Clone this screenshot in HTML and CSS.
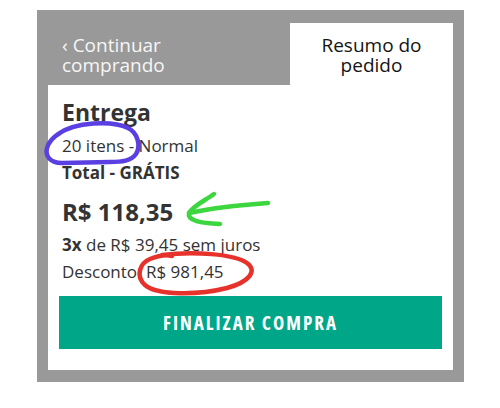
FILE: index.html
```html
<!DOCTYPE html>
<html lang="pt-BR">
<head>
<meta charset="utf-8">
<title>Resumo do pedido</title>
<link rel="stylesheet" href="styles.css">
</head>
<body>
<div class="frame">
  <div class="tabs">
    <div class="tab tab-back">&lsaquo; Continuar<br>comprando</div>
    <div class="tab tab-active">Resumo do<br>pedido</div>
  </div>
  <div class="panel">
    <div class="title">Entrega</div>
    <div class="items">20 itens - Normal</div>
    <div class="total">Total - GRÁTIS</div>
    <div class="price">R$ 118,35</div>
    <div class="install"><b>3x</b> de R$ 39,45 sem juros</div>
    <div class="discount">Desconto: R$ 981,45</div>
    <button class="checkout">FINALIZAR COMPRA</button>
  </div>
</div>
<svg class="marks" width="500" height="408" viewBox="0 0 500 408">
  <path class="mark-purple" d="M58 134 C75 122 112 120 128 128 C138 133 141 146 136 154 C131 161 122 162 110 162 L62 163 C50 163 45 156 47 148 C49 141 53 137 60 133"/>
  <path class="mark-green" d="M268 203 C240 205 212 208 189 213"/>
  <path class="mark-green" d="M214 194 C204 201 193 206 189 213 C187 221 201 223 220 224"/>
  <path class="mark-red" d="M162 255 C194 251 234 254 247 263 C258 271 249 282 227 288 C199 295 158 296 145 285 C135 276 140 263 150 259 C160 255 168 255 172 256"/>
</svg>
</body>
</html>
```
FILE: styles.css
```css
html, body {
  margin: 0;
  padding: 0;
  background: #ffffff;
}
body {
  font-family: "Open Sans", "Liberation Sans", sans-serif;
  color: #333333;
  width: 500px;
  height: 408px;
  position: relative;
  overflow: hidden;
}
.frame {
  margin: 10px 0 0 37px;
  width: 427px;
  box-sizing: border-box;
  background: #999999;
  padding: 13px 11px 12px;
}
.tabs {
  display: flex;
  height: 62px;
}
.tab {
  font-size: 19px;
  line-height: 20px;
  padding-top: 12px;
  box-sizing: border-box;
  white-space: nowrap;
}
.tab-back {
  flex: 1;
  color: #f6f6f6;
  padding-left: 14px;
}
.tab-active {
  width: 163px;
  background: #ffffff;
  color: #141414;
  text-align: center;
}
.panel {
  background: #ffffff;
  height: 285px;
  box-sizing: border-box;
  padding: 12px 11px 0;
}
.title, .items, .total, .price, .install, .discount {
  padding-left: 3px;
  white-space: nowrap;
}
.title {
  font-size: 23px;
  font-weight: 700;
  line-height: 30px;
}
.items {
  font-size: 17px;
  line-height: 24px;
  margin-top: 7px;
}
.total {
  font-size: 17px;
  font-weight: 700;
  line-height: 24px;
  margin-top: 3px;
}
.price {
  font-size: 24px;
  font-weight: 700;
  line-height: 30px;
  margin-top: 12px;
}
.install {
  font-size: 17px;
  line-height: 24px;
  margin-top: 6px;
}
.discount {
  font-size: 17px;
  line-height: 24px;
  margin-top: 3px;
}
.checkout {
  display: flex;
  align-items: center;
  justify-content: center;
  width: 100%;
  height: 53px;
  margin-top: 12px;
  border: none;
  background: #00a688;
  color: #ffffff;
  font-family: "Open Sans", "Liberation Sans", sans-serif;
  font-size: 19px;
  font-weight: 700;
  font-stretch: 75%;
  letter-spacing: 2px;
  padding: 0;
}
.marks {
  position: absolute;
  left: 0;
  top: 0;
  pointer-events: none;
}
.marks path {
  fill: none;
  stroke-width: 4.5;
  stroke-linecap: round;
  stroke-linejoin: round;
}
.mark-purple { stroke: #5a3fe2; }
.mark-green { stroke: #3cd63f; }
.mark-red { stroke: #e6322b; }
```
